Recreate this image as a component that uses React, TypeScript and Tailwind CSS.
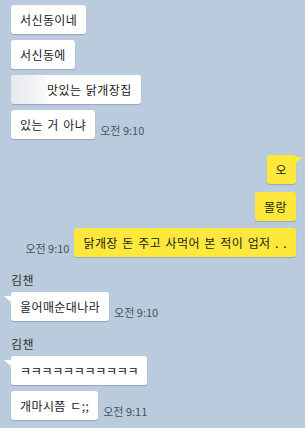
const kr = { fontFamily: '"Noto Sans CJK KR", "Noto Sans", sans-serif' };

function TailLeft() {
  return (
    <svg className="absolute left-[-7px] top-[4px]" width="8" height="7" viewBox="0 0 8 7">
      <polygon points="0,0 8,0 8,7" fill="#ffffff" />
    </svg>
  );
}

function TailRight() {
  return (
    <svg className="absolute right-[-7px] top-[2px]" width="8" height="7" viewBox="0 0 8 7">
      <polygon points="0,0 8,0 0,7" fill="#fee83b" />
    </svg>
  );
}

function Time({ children }: { children: string }) {
  return <span className="text-[11px] leading-none text-[#46515c] pb-[3px] whitespace-nowrap">{children}</span>;
}

function Bubble({ text, mine, tail, className = '' }: { text: React.ReactNode; mine?: boolean; tail?: boolean; className?: string }) {
  return (
    <div
      className={`relative h-[29px] px-[9px] flex items-center rounded-[3px] text-[12px] text-[#1a1a1a] whitespace-nowrap shadow-[0_1px_1px_rgba(0,0,0,0.18)] ${
        mine ? 'bg-[#fee83b]' : 'bg-white'
      } ${className}`}
    >
      {tail && (mine ? <TailRight /> : <TailLeft />)}
      {text}
    </div>
  );
}

function Left({ text, time, tail, className = '', tight }: { text: React.ReactNode; time?: string; tail?: boolean; className?: string; tight?: boolean }) {
  return (
    <div className={`flex items-end gap-[5px] ${className}`}>
      <Bubble text={text} tail={tail} className={tight ? 'tracking-[-0.3px]' : 'tracking-[0.4px] [word-spacing:1.4px]'} />
      {time && <Time>{time}</Time>}
    </div>
  );
}

function Right({ text, time, tail, className = '' }: { text: React.ReactNode; time?: string; tail?: boolean; className?: string }) {
  return (
    <div className={`flex items-end justify-end gap-[5px] ${className}`}>
      {time && <Time>{time}</Time>}
      <Bubble text={text} mine tail={tail} className="tracking-[0.4px] [word-spacing:1.4px]" />
    </div>
  );
}

export default function App() {
  return (
    <div className="w-[305px] h-[428px] overflow-hidden bg-[#b9cbdd] pt-[5px] pl-[11px] pr-[9px]" style={kr}>
      <div className="flex flex-col">
        <Left text="서신동이네" />
        <Left className="mt-[6px]" text="서신동에" />
        <Left
          className="mt-[6px]"
          text={
            <>
              <span className="absolute left-0 top-0 bottom-0 w-[36px] rounded-l-[3px] bg-[linear-gradient(90deg,#e6e8eb,#f2f3f4_60%,#fbfbfb)]" />
              <span className="w-[27px]" />
              <span className="relative">맛있는 닭개장집</span>
            </>
          }
        />
        <Left className="mt-[6px]" text="있는 거 아냐" time="오전 9:10" />

        <Right className="mt-[16px]" text="오" tail />
        <Right className="mt-[8px]" text="몰랑" />
        <Right className="mt-[7px]" text="닭개장 돈 주고 사먹어 본 적이 업저 . ." time="오전 9:10" />

        <div className="mt-[16px] text-[12px] leading-[14px] text-[#333] tracking-[0.4px]">김챈</div>
        <Left className="mt-[5px]" text="울어매순대나라" time="오전 9:10" tail />

        <div className="mt-[16px] text-[12px] leading-[14px] text-[#333] tracking-[0.4px]">김챈</div>
        <Left className="mt-[5px]" text="ㅋㅋㅋㅋㅋㅋㅋㅋㅋㅋㅋ" tail tight />
        <Left className="mt-[6px]" text="개마시쯤 ㄷ;;" time="오전 9:11" />
      </div>
    </div>
  );
}
